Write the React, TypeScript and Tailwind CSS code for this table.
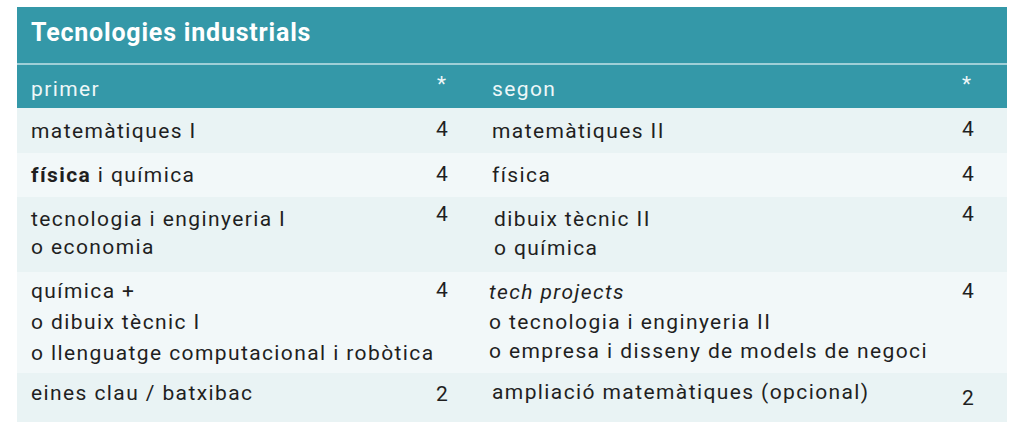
const rows = [
  {
    bg: "bg-[#e9f3f4]",
    h: "h-[45px]",
    left: <p className="pt-[10px]">matemàtiques I</p>,
    leftNum: <p className="pt-[8px]">4</p>,
    right: <p className="pt-[10px]">matemàtiques II</p>,
    rightNum: <p className="pt-[8px]">4</p>,
  },
  {
    bg: "bg-[#f2f8f9]",
    h: "h-[44px]",
    left: (
      <p className="pt-[9px]">
        <span className="font-bold">física</span> i química
      </p>
    ),
    leftNum: <p className="pt-[8px]">4</p>,
    right: <p className="pt-[9px]">física</p>,
    rightNum: <p className="pt-[8px]">4</p>,
  },
  {
    bg: "bg-[#e9f3f4]",
    h: "h-[75px]",
    left: (
      <div className="pt-[8px] leading-[28px]">
        <p>tecnologia i enginyeria I</p>
        <p>o economia</p>
      </div>
    ),
    leftNum: <p className="pt-[4px]">4</p>,
    right: (
      <div className="pt-[8px] pl-[2px] leading-[29px]">
        <p>dibuix tècnic II</p>
        <p>o química</p>
      </div>
    ),
    rightNum: <p className="pt-[4px]">4</p>,
  },
  {
    bg: "bg-[#f2f8f9]",
    h: "h-[101px]",
    left: (
      <div className="pt-[4px] leading-[31px]">
        <p>química +</p>
        <p>o dibuix tècnic I</p>
        <p className="whitespace-nowrap">o llenguatge computacional i robòtica</p>
      </div>
    ),
    leftNum: <p className="pt-[5px]">4</p>,
    right: (
      <div className="pt-[6px] -ml-[3px] leading-[29.5px]">
        <p className="italic">tech projects</p>
        <p>o tecnologia i enginyeria II</p>
        <p className="whitespace-nowrap">o empresa i disseny de models de negoci</p>
      </div>
    ),
    rightNum: <p className="pt-[6px]">4</p>,
  },
  {
    bg: "bg-[#e9f3f4]",
    h: "h-[49px]",
    left: <p className="pt-[7px]">eines clau / batxibac</p>,
    leftNum: <p className="pt-[8px]">2</p>,
    right: <p className="pt-[6px]">ampliació matemàtiques (opcional)</p>,
    rightNum: <p className="pt-[12px]">2</p>,
  },
]

export default function App() {
  return (
    <div className="w-[1024px] h-[432px] bg-white pt-[7px] pl-[17px] font-['Roboto',sans-serif]">
      <div className="w-[990px]">
        <div className="h-[56px] bg-[#3498a8] pl-[14px] pt-[11px]">
          <h1 className="text-[25px] leading-[30px] font-bold text-white tracking-[0.8px]">Tecnologies industrials</h1>
        </div>
        <div className="h-[2px] bg-[#9fcfd7]" />
        <div className="h-[43px] bg-[#3498a8] grid grid-cols-[405px_56px_470px_1fr] pl-[14px] text-[21px] leading-[26px] text-[#eef7f8] tracking-[1.4px]">
          <p className="pt-[11px]">primer</p>
          <p className="pt-[6px] pl-[1px]">*</p>
          <p className="pt-[11px]">segon</p>
          <p className="pt-[6px]">*</p>
        </div>
        {rows.map((r, i) => (
          <div
            key={i}
            className={`${r.bg} ${r.h} grid grid-cols-[405px_56px_470px_1fr] pl-[14px] text-[21px] leading-[26px] text-[#1f1f1f] tracking-[1.4px]`}
          >
            {r.left}
            {r.leftNum}
            {r.right}
            {r.rightNum}
          </div>
        ))}
      </div>
    </div>
  )
}
